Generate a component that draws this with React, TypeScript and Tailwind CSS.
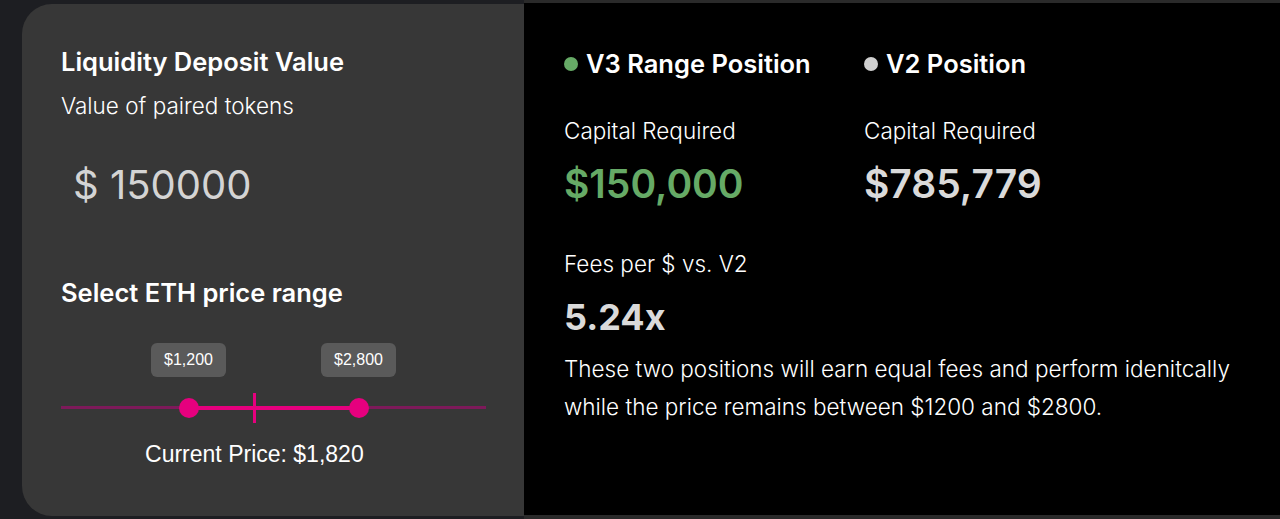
import React from 'react';

const MIN = 0;
const MAX = 4000;
const low = 1200;
const high = 2800;
const current = 1820;

const pct = (v: number) => ((v - MIN) / (MAX - MIN)) * 100;

// zero-width anchor that centres its child on the point where it sits
function Anchor({ children }: { children: React.ReactNode }) {
  return <div className="flex w-0 shrink-0 justify-center">{children}</div>;
}

function Bubble({ label }: { label: string }) {
  return (
    <div className="flex h-[34px] shrink-0 items-center whitespace-nowrap rounded-md bg-[#5a5a5a] px-[13px] font-['Liberation_Sans',Arial,sans-serif] text-[16px] text-white">
      {label}
    </div>
  );
}

function Thumb() {
  return <div className="z-10 -mx-[10px] h-[20px] w-[20px] shrink-0 rounded-full bg-[#e6007e]" />;
}

function RangeSlider() {
  return (
    <div className="w-[425px]">
      {/* value bubbles */}
      <div className="flex">
        <div className="shrink-0" style={{ width: `${pct(low)}%` }} />
        <Anchor>
          <Bubble label="$1,200" />
        </Anchor>
        <div className="shrink-0" style={{ width: `${pct(high) - pct(low)}%` }} />
        <Anchor>
          <Bubble label="$2,800" />
        </Anchor>
      </div>

      {/* track */}
      <div className="mt-[21px] flex h-[20px] items-center">
        <div className="h-[3px] shrink-0 bg-[#7d1a5a]" style={{ width: `${pct(low)}%` }} />
        <Thumb />
        <div className="flex h-[4px] shrink-0 items-center bg-[#e6007e]" style={{ width: `${pct(high) - pct(low)}%` }}>
          <div className="shrink-0" style={{ width: `${((current - low) / (high - low)) * 100}%` }} />
          <Anchor>
            <div className="h-[30px] w-[3px] shrink-0 bg-[#e6007e]" />
          </Anchor>
        </div>
        <Thumb />
        <div className="h-[3px] flex-1 bg-[#7d1a5a]" />
      </div>

      {/* current price */}
      <div className="mt-[22px] flex">
        <div className="shrink-0" style={{ width: `${pct(current)}%` }} />
        <Anchor>
          <span className="whitespace-nowrap font-['Liberation_Sans',Arial,sans-serif] text-[23px] leading-7 text-white">
            Current Price: $1,820
          </span>
        </Anchor>
      </div>
    </div>
  );
}

function PositionColumn({
  dot,
  title,
  value,
  valueColor,
}: {
  dot: string;
  title: string;
  value: string;
  valueColor: string;
}) {
  return (
    <div className="w-[300px]">
      <div className="flex items-center gap-2">
        <span className={`h-[14px] w-[14px] rounded-full ${dot}`} />
        <h3 className="text-[25.5px] font-semibold leading-8 text-white">{title}</h3>
      </div>
      <p className="mt-[37px] text-[22.5px] font-light leading-7 text-white">Capital Required</p>
      <p className={`mt-[19px] text-[39px] font-semibold leading-10 ${valueColor}`}>{value}</p>
    </div>
  );
}

export default function App() {
  return (
    <div className="flex h-[519px] w-full items-center bg-[#1d1e22] pl-[22px] font-['Inter',sans-serif]">
      {/* Deposit panel */}
      <div className="h-[512px] w-[502px] shrink-0 rounded-l-[30px] bg-[#373737] pl-[39px] pt-[42px]">
        <h2 className="text-[25.5px] font-semibold leading-8 text-white">Liquidity Deposit Value</h2>
        <p className="mt-[14px] text-[22.5px] font-light leading-7 text-white">Value of paired tokens</p>
        <div className="mt-[45px] pl-[12px] text-[40px] leading-10 text-[#d4d4d4]">$ 150000</div>
        <h2 className="mt-[72px] text-[25.5px] font-semibold leading-8 text-white">Select ETH price range</h2>
        <div className="mt-[34px]">
          <RangeSlider />
        </div>
      </div>

      {/* Comparison panel */}
      <div className="h-[519px] flex-1 border-b-[4px] border-t-[3px] border-[#2a2a2a] bg-black pl-[40px] pt-[45px]">
        <div className="flex">
          <PositionColumn dot="bg-[#66aa66]" title="V3 Range Position" value="$150,000" valueColor="text-[#66aa66]" />
          <PositionColumn dot="bg-[#cfcfcf]" title="V2 Position" value="$785,779" valueColor="text-[#dadada]" />
        </div>
        <p className="mt-[46px] text-[22.5px] font-light leading-7 text-white">Fees per $ vs. V2</p>
        <p className="mt-[19px] text-[36px] font-bold leading-10 text-[#dadada]">5.24x</p>
        <p className="mt-[13px] max-w-[680px] text-[22.5px] font-light leading-[38px] text-white">
          These two positions will earn equal fees and perform idenitcally while the price remains between
          $1200 and $2800.
        </p>
      </div>
    </div>
  );
}
